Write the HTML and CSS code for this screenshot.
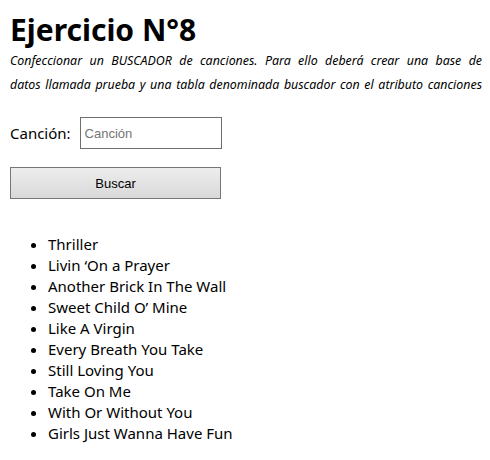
FILE: index.html
```html
<!DOCTYPE html>
<html lang="es">
<head>
<meta charset="utf-8">
<title>Ejercicio N°8</title>
<link rel="stylesheet" href="styles.css">
</head>
<body>
<h1 class="title">Ejercicio N°8</h1>
<p class="desc"><span class="line">Confeccionar un BUSCADOR de canciones. Para ello deberá crear una base de</span> <span class="line">datos llamada prueba y una tabla denominada buscador con el atributo canciones</span></p>
<form class="search">
  <div class="field">
    <label class="label" for="cancion">Canción:</label>
    <input class="input" id="cancion" type="text" placeholder="Canción">
  </div>
  <button class="btn" type="button">Buscar</button>
</form>
<ul class="songs">
  <li>Thriller</li>
  <li>Livin ‘On a Prayer</li>
  <li>Another Brick In The Wall</li>
  <li>Sweet Child O’ Mine</li>
  <li>Like A Virgin</li>
  <li>Every Breath You Take</li>
  <li>Still Loving You</li>
  <li>Take On Me</li>
  <li>With Or Without You</li>
  <li>Girls Just Wanna Have Fun</li>
</ul>
</body>
</html>
```
FILE: styles.css
```css
body {
  margin: 0;
  padding: 0 8px 0 10px;
  font-family: "Noto Sans", "Open Sans", sans-serif;
  color: #000;
  background: #fff;
}
.title {
  margin: 11px 0 0;
  font-size: 30px;
  line-height: 38px;
  font-weight: 700;
}
.desc {
  margin: 0;
  font-size: 12.4px;
  font-style: italic;
  line-height: 24px;
}
.line {
  display: block;
  white-space: nowrap;
  text-align: justify;
  text-align-last: justify;
}
.search {
  margin-top: 20px;
  width: 211px;
}
.field {
  display: flex;
  align-items: center;
  gap: 9px;
}
.label {
  font-size: 15px;
}
.input {
  box-sizing: border-box;
  width: 142px;
  height: 32px;
  margin: 0;
  padding: 0 4px;
  border: 1px solid #6e6e6e;
  outline: none;
  font-family: "Liberation Sans", Arial, sans-serif;
  font-size: 13px;
}
.input::placeholder {
  color: #757575;
}
.btn {
  display: block;
  box-sizing: border-box;
  width: 211px;
  height: 32px;
  margin-top: 18px;
  border: 1px solid #767676;
  background: linear-gradient(#ededed, #d9d9d9);
  font-family: "Liberation Sans", Arial, sans-serif;
  font-size: 13px;
  color: #000;
}
.songs {
  margin: 35px 0 0;
  padding-left: 38px;
  font-size: 15px;
  line-height: 21px;
}
```
